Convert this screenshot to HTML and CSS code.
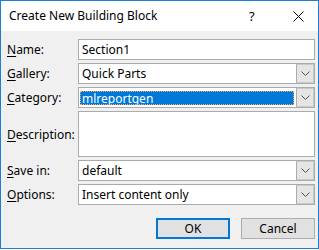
FILE: index.html
```html
<!DOCTYPE html>
<html>
<head>
<meta charset="utf-8">
<link rel="stylesheet" href="styles.css">
</head>
<body>
<div class="window">
  <div class="titlebar">
    <span class="title">Create New Building Block</span>
    <span class="help">?</span>
    <svg class="close" width="11" height="11" viewBox="0 0 11 11"><path d="M0.5 0.5 L10.5 10.5 M10.5 0.5 L0.5 10.5" stroke="#000" stroke-width="1" fill="none"/></svg>
  </div>
  <div class="content">
    <div class="form">
      <label class="lbl"><u>N</u>ame:</label>
      <div class="field text"><span class="val">Section1</span></div>

      <label class="lbl"><u>G</u>allery:</label>
      <div class="field combo"><span class="val">Quick Parts</span><span class="drop"><svg width="9" height="5" viewBox="0 0 9 5"><path d="M0.5 0.5 L4.5 4.5 L8.5 0.5" stroke="#555" fill="none"/></svg></span></div>

      <label class="lbl"><u>C</u>ategory:</label>
      <div class="field combo"><span class="val sel">mlreportgen</span><span class="drop"><svg width="9" height="5" viewBox="0 0 9 5"><path d="M0.5 0.5 L4.5 4.5 L8.5 0.5" stroke="#555" fill="none"/></svg></span></div>

      <label class="lbl desc"><span><u>D</u>escription:</span></label>
      <div class="field area"></div>

      <label class="lbl"><u>S</u>ave in:</label>
      <div class="field combo"><span class="val">default</span><span class="drop"><svg width="9" height="5" viewBox="0 0 9 5"><path d="M0.5 0.5 L4.5 4.5 L8.5 0.5" stroke="#555" fill="none"/></svg></span></div>

      <label class="lbl"><u>O</u>ptions:</label>
      <div class="field combo"><span class="val">Insert content only</span><span class="drop"><svg width="9" height="5" viewBox="0 0 9 5"><path d="M0.5 0.5 L4.5 4.5 L8.5 0.5" stroke="#555" fill="none"/></svg></span></div>
    </div>
    <div class="buttons">
      <button class="btn default">OK</button>
      <button class="btn">Cancel</button>
    </div>
  </div>
</div>
</body>
</html>
```
FILE: styles.css
```css
* { box-sizing: border-box; }
html, body { margin: 0; padding: 0; background: #ffffff; }
body {
  font-family: "Noto Sans", "Open Sans", sans-serif;
  font-size: 12px;
  color: #000;
}
.window {
  width: 319px;
  height: 249px;
  border: 1px solid #1c7fd6;
  background: #f0f0f0;
  display: flex;
  flex-direction: column;
}
.titlebar {
  height: 30px;
  background: #fff;
  display: flex;
  align-items: center;
  padding-left: 8px;
  flex-shrink: 0;
}
.title {
  font-size: 12px;
  flex: 1;
  padding-bottom: 1px;
}
.help {
  font-size: 13px;
  width: 10px;
  margin-right: 34px;
}
.close {
  margin-right: 14px;
}
.content {
  flex: 1;
  padding: 8px 3px 0 6px;
  display: flex;
  flex-direction: column;
}
.form {
  display: grid;
  grid-template-columns: 71px 237px;
  grid-template-rows: 21px 21px 21px 46px 21px 21px;
  row-gap: 3px;
}
.lbl {
  display: flex;
  align-items: center;
  line-height: 1;
}
.lbl.desc { padding-top: 2px; }
.lbl u { text-decoration: underline; text-underline-offset: 2px; }
.field {
  background: #fff;
  border: 1px solid #ababab;
  display: flex;
  align-items: center;
}
.val {
  padding-left: 3px;
  flex: 1;
  line-height: 15px;
}
.combo .val { margin: 2px 2px 2px 1px; padding-left: 2px; }
.sel {
  background: #0078d7;
  color: #fff;
  outline: 1px dotted #f6a860;
  outline-offset: -1px;
  height: 14px;
}
.drop {
  width: 18px;
  align-self: stretch;
  background: #e5e5e5;
  border: 1px solid #c9c9c9;
  border-left: 1px solid #ababab;
  display: flex;
  align-items: center;
  justify-content: center;
}
.buttons {
  margin-top: 13px;
  display: flex;
  justify-content: flex-end;
  gap: 11px;
}
.btn {
  width: 74px;
  height: 21px;
  background: #e1e1e1;
  border: 1px solid #adadad;
  font-family: inherit;
  font-size: 12px;
  color: #000;
  padding: 0;
}
.btn.default {
  border: 2px solid #0078d7;
}
```
